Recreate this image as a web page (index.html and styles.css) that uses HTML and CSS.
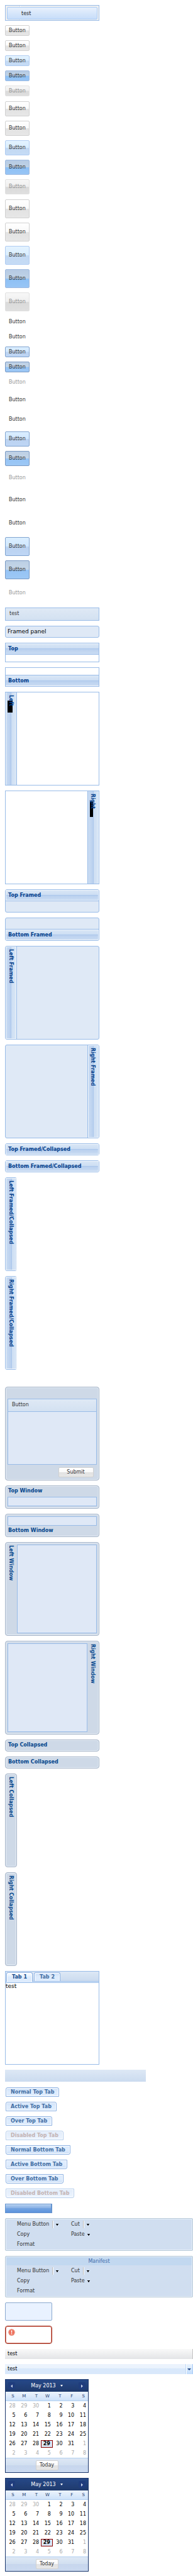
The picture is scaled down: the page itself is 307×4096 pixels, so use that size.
FILE: index.html
```html
<!DOCTYPE html>
<html lang="en">
<head>
<meta charset="utf-8">
<title>Theme components</title>
<link rel="stylesheet" href="styles.css">
</head>
<body>
<main class="page">
  <div class="menu half"><button class="menu-item">test</button></div>

  <section class="buttons small">
    <button class="btn">Button</button>
    <button class="btn">Button</button>
    <button class="btn over">Button</button>
    <button class="btn pressed">Button</button>
    <button class="btn" disabled>Button</button>
  </section>
  <section class="buttons medium">
    <button class="btn">Button</button>
    <button class="btn">Button</button>
    <button class="btn over">Button</button>
    <button class="btn pressed">Button</button>
    <button class="btn" disabled>Button</button>
  </section>
  <section class="buttons large">
    <button class="btn">Button</button>
    <button class="btn">Button</button>
    <button class="btn over">Button</button>
    <button class="btn pressed">Button</button>
    <button class="btn" disabled>Button</button>
  </section>
  <section class="buttons small">
    <button class="btn flat">Button</button>
    <button class="btn flat">Button</button>
    <button class="btn flat over">Button</button>
    <button class="btn flat pressed">Button</button>
    <button class="btn flat" disabled>Button</button>
  </section>
  <section class="buttons medium">
    <button class="btn flat">Button</button>
    <button class="btn flat">Button</button>
    <button class="btn flat over">Button</button>
    <button class="btn flat pressed">Button</button>
    <button class="btn flat" disabled>Button</button>
  </section>
  <section class="buttons large">
    <button class="btn flat">Button</button>
    <button class="btn flat">Button</button>
    <button class="btn flat over">Button</button>
    <button class="btn flat pressed">Button</button>
    <button class="btn flat" disabled>Button</button>
  </section>

  <div class="toolbar half"><span>test</span></div>
  <div class="framed-panel half">Framed panel</div>

  <section class="panel top half"><h2 class="head">Top</h2><div class="body"></div></section>
  <section class="panel bottom half"><div class="body"></div><h2 class="head">Bottom</h2></section>
  <section class="panel left half"><h2 class="head marked"><span>Left</span></h2><div class="body"></div></section>
  <section class="panel right half"><div class="body"></div><h2 class="head marked"><span>Right</span></h2></section>

  <section class="panel framed top half"><h2 class="head">Top Framed</h2><div class="body"></div></section>
  <section class="panel framed bottom half"><div class="body"></div><h2 class="head">Bottom Framed</h2></section>
  <section class="panel framed left half"><h2 class="head">Left Framed</h2><div class="body"></div></section>
  <section class="panel framed right half"><div class="body"></div><h2 class="head">Right Framed</h2></section>

  <section class="panel framed top closed half"><h2 class="head">Top Framed/Collapsed</h2></section>
  <section class="panel framed bottom closed half"><h2 class="head">Bottom Framed/Collapsed</h2></section>
  <section class="panel framed left closed"><h2 class="head">Left Framed/Collapsed</h2></section>
  <section class="panel framed left closed"><h2 class="head">Right Framed/Collapsed</h2></section>

  <section class="window dialog half">
    <div class="window-body"><div class="window-bar">Button</div></div>
    <div class="window-foot"><button class="btn">Submit</button></div>
  </section>
  <section class="window top half"><h2 class="title">Top Window</h2><div class="window-body"></div></section>
  <section class="window bottom half"><div class="window-body"></div><h2 class="title">Bottom Window</h2></section>
  <section class="window left half"><h2 class="title">Left Window</h2><div class="window-body"></div></section>
  <section class="window right half"><div class="window-body"></div><h2 class="title">Right Window</h2></section>
  <section class="window closed half"><h2 class="title">Top Collapsed</h2></section>
  <section class="window closed half"><h2 class="title">Bottom Collapsed</h2></section>
  <section class="window left closed"><h2 class="title">Left Collapsed</h2></section>
  <section class="window left closed"><h2 class="title">Right Collapsed</h2></section>

  <section class="tab-panel half">
    <div class="tab-strip" role="tablist">
      <button class="tab active" role="tab" aria-selected="true">Tab 1</button>
      <button class="tab" role="tab" aria-selected="false">Tab 2</button>
    </div>
    <div class="tab-band"></div>
    <div class="tab-body">test</div>
  </section>
  <div class="tab-bar"></div>

  <section class="tab-list">
    <button class="tab">Normal Top Tab</button>
    <button class="tab">Active Top Tab</button>
    <button class="tab">Over Top Tab</button>
    <button class="tab" disabled>Disabled Top Tab</button>
    <button class="tab low">Normal Bottom Tab</button>
    <button class="tab low">Active Bottom Tab</button>
    <button class="tab low">Over Bottom Tab</button>
    <button class="tab low" disabled>Disabled Bottom Tab</button>
  </section>

  <div class="progress quarter"></div>

  <section class="group">
    <div class="group-grid">
      <button class="tool">Menu Button<i class="split"></i><svg class="caret" viewBox="0 0 4 3"><path d="M0 0h4v1H3v1H2.500V3h-1V2H1V1H0z"/></svg></button>
      <button class="tool">Cut<i class="split"></i><svg class="caret" viewBox="0 0 4 3"><path d="M0 0h4v1H3v1H2.500V3h-1V2H1V1H0z"/></svg></button>
      <button class="tool">Copy</button>
      <button class="tool">Paste<svg class="caret" viewBox="0 0 4 3"><path d="M0 0h4v1H3v1H2.500V3h-1V2H1V1H0z"/></svg></button>
      <button class="tool">Format</button>
    </div>
  </section>
  <section class="group">
    <h2 class="group-title">Manifest</h2>
    <div class="group-grid titled">
      <button class="tool">Menu Button<i class="split"></i><svg class="caret" viewBox="0 0 4 3"><path d="M0 0h4v1H3v1H2.500V3h-1V2H1V1H0z"/></svg></button>
      <button class="tool">Cut<i class="split"></i><svg class="caret" viewBox="0 0 4 3"><path d="M0 0h4v1H3v1H2.500V3h-1V2H1V1H0z"/></svg></button>
      <button class="tool">Copy</button>
      <button class="tool">Paste<svg class="caret" viewBox="0 0 4 3"><path d="M0 0h4v1H3v1H2.500V3h-1V2H1V1H0z"/></svg></button>
      <button class="tool">Format</button>
    </div>
  </section>

  <div class="tip quarter"></div>
  <div class="tip error quarter">
    <svg class="alert" viewBox="0 0 16 16">
      <circle cx="8" cy="8" r="7.500" fill="#d9604c"/>
      <circle cx="8" cy="8" r="6.300" fill="#ee6a55" stroke="#f9b5a5" stroke-width="1"/>
      <path d="M6.800 3.500h2.400v5.500H6.800zM6.800 10.300h2.400v2.200H6.800z" fill="#fff"/>
    </svg>
  </div>

  <div class="column-head"><span>test</span></div>
  <div class="column-head over"><span>test</span><button class="trigger" aria-label="Column menu"><svg viewBox="0 0 6 3"><path d="M0 0h6L3 3z"/></svg></button></div>

  <section class="calendar">
    <header class="cal-head">
      <button class="nav" aria-label="Previous month"><svg viewBox="0 0 4 7"><path d="M4 0v7L0 3.500z"/></svg></button>
      <button class="month">May 2013<svg viewBox="0 0 4 3"><path d="M0 0h4L2 3z"/></svg></button>
      <button class="nav" aria-label="Next month"><svg viewBox="0 0 4 7"><path d="M0 0v7l4-3.500z"/></svg></button>
    </header>
    <table class="days">
      <thead><tr><th>S</th><th>M</th><th>T</th><th>W</th><th>T</th><th>F</th><th>S</th></tr></thead>
      <tbody>
        <tr><td class="out">28</td><td class="out">29</td><td class="out">30</td><td>1</td><td>2</td><td>3</td><td>4</td></tr>
        <tr><td>5</td><td>6</td><td>7</td><td>8</td><td>9</td><td>10</td><td>11</td></tr>
        <tr><td>12</td><td>13</td><td>14</td><td>15</td><td>16</td><td>17</td><td>18</td></tr>
        <tr><td>19</td><td>20</td><td>21</td><td>22</td><td>23</td><td>24</td><td>25</td></tr>
        <tr><td>26</td><td>27</td><td>28</td><td class="today"><span>29</span></td><td>30</td><td>31</td><td class="out">1</td></tr>
        <tr><td class="out">2</td><td class="out">3</td><td class="out">4</td><td class="out">5</td><td class="out">6</td><td class="out">7</td><td class="out">8</td></tr>
      </tbody>
    </table>
    <footer class="cal-foot"><button class="btn">Today</button></footer>
  </section>
  <section class="calendar">
    <header class="cal-head">
      <button class="nav" aria-label="Previous month"><svg viewBox="0 0 4 7"><path d="M4 0v7L0 3.500z"/></svg></button>
      <button class="month">May 2013<svg viewBox="0 0 4 3"><path d="M0 0h4L2 3z"/></svg></button>
      <button class="nav" aria-label="Next month"><svg viewBox="0 0 4 7"><path d="M0 0v7l4-3.500z"/></svg></button>
    </header>
    <table class="days">
      <thead><tr><th>S</th><th>M</th><th>T</th><th>W</th><th>T</th><th>F</th><th>S</th></tr></thead>
      <tbody>
        <tr><td class="out">28</td><td class="out">29</td><td class="out">30</td><td>1</td><td>2</td><td>3</td><td>4</td></tr>
        <tr><td>5</td><td>6</td><td>7</td><td>8</td><td>9</td><td>10</td><td>11</td></tr>
        <tr><td>12</td><td>13</td><td>14</td><td>15</td><td>16</td><td>17</td><td>18</td></tr>
        <tr><td>19</td><td>20</td><td>21</td><td>22</td><td>23</td><td>24</td><td>25</td></tr>
        <tr><td>26</td><td>27</td><td>28</td><td class="today"><span>29</span></td><td>30</td><td>31</td><td class="out">1</td></tr>
        <tr><td class="out">2</td><td class="out">3</td><td class="out">4</td><td class="out">5</td><td class="out">6</td><td class="out">7</td><td class="out">8</td></tr>
      </tbody>
    </table>
    <footer class="cal-foot"><button class="btn">Today</button></footer>
  </section>
</main>
</body>
</html>
```

FILE: styles.css
```css
* { box-sizing: border-box; }
body { margin: 0; background: #fff; font: 8px/10px "DejaVu Sans", Verdana, sans-serif; color: #000; }
h2 { margin: 0; font: inherit; }
button { margin: 0; padding: 0; border: 0; background: none; font: inherit; color: inherit; white-space: nowrap; }
svg { display: block; }

.page { display: flex; flex-direction: column; align-items: flex-start; gap: 8px; padding: 8px 0 7px 8px; }
.half { width: 50%; }
.quarter { width: 25%; }

/* Menu */
.menu { padding: 2px 2px 1px; margin-bottom: -1px; border: 1px solid #99bce8; background: linear-gradient(90deg, #f0f0f0 22px, #e0e0e0 22px, #e0e0e0 23px, #fff 23px, #fff 24px, #f0f0f0 24px); }
.menu-item { display: block; width: 100%; height: 20px; padding: 2px 0 0 22px; border: 1px solid #a9cbf5; border-radius: 2px; background: linear-gradient(#e7f0fc, #c7ddf9); text-align: left; color: #222; }

/* Buttons */
.buttons { display: flex; flex-direction: column; align-items: flex-start; gap: 7px; }
.btn { height: 17px; padding: 0 5px; border: 1px solid #d1d1d1; border-radius: 2px; background: linear-gradient(#fff, #f9f9f9 48%, #e2e2e2 52%, #e7e7e7); color: #333; }
.buttons .btn { min-width: 38px; }
.medium .btn { height: 24px; }
.large .btn { height: 30px; }
.btn.over { border-color: #b0ccf2; background: linear-gradient(#e4f3ff, #d9edff 48%, #c2d8f2 52%, #c6dcf6); }
.btn.pressed { border-color: #9ebae1; background: linear-gradient(#b6cbe4, #bfd2e6 48%, #8dc0f5 52%, #98c5f5); }
.btn:disabled { border-color: #e1e1e1; background: linear-gradient(#f7f7f7, #efefef 48%, #dadada 52%, #dfdfdf); color: #8f8f8f; }
.btn.flat, .btn.flat:disabled { border-color: transparent; background: none; }
.btn.flat:disabled { color: #999; }
.btn.flat.over { border-color: #81a4d0; background: linear-gradient(#dbeeff, #d0e7ff 48%, #bbd2f0 52%, #bed6f5); }
.btn.flat.pressed { border-color: #7a9ac4; background: linear-gradient(#bccfe5, #c5d6e7 48%, #95c3f5 52%, #9dc8f5); }

.toolbar { height: 21px; padding: 4px 6px; border: 1px solid #99bce8; background: linear-gradient(#dfe9f5, #d3e1f1); color: #333; }
.framed-panel { height: 19px; padding: 3px; border: 1px solid #99bce8; border-radius: 3px; background: #dfe9f6; font-size: 9px; line-height: 11px; }

/* Panels */
.panel { display: flex; border: 1px solid #99bce8; }
.panel.top, .panel.bottom { flex-direction: column; }
.panel .head { display: flex; align-items: center; padding: 0 4px; color: #04408c; font-weight: bold; }
.panel.top .head, .panel.bottom .head { height: 18px; background: linear-gradient(#dae7f6, #cddef3 45%, #abc7ec 46%, #abc7ec 50%, #b8cfee 51%, #cbddf3); }
.panel.top .head { border-bottom: 1px solid #99bce8; box-shadow: inset 0 1px #f0f5fb; }
.panel.bottom .head { border-top: 1px solid #99bce8; box-shadow: inset 0 -1px #f0f5fb; }
.panel .body { height: 11px; }
.panel.left, .panel.right { height: 149px; }
.panel.left .body, .panel.right .body { flex: 1; height: auto; }
.panel.left .head, .panel.right .head { width: 18px; padding: 4px 2px 4px 0; writing-mode: vertical-rl; justify-content: flex-start; background: linear-gradient(270deg, #dae7f6, #cddef3 45%, #abc7ec 46%, #abc7ec 50%, #b8cfee 51%, #cbddf3); }
.panel.left .head { border-right: 1px solid #99bce8; box-shadow: inset 1px 0 #f0f5fb; }
.panel.right .head { border-left: 1px solid #99bce8; box-shadow: inset -1px 0 #f0f5fb; }
.marked { position: relative; }
.marked span { position: relative; }
.marked::before { content: ""; position: absolute; top: 13px; left: 3px; width: 8px; height: 19px; background: #000; }
.right .marked::before { top: 16px; width: 5px; height: 25px; }

.panel.framed { border-radius: 3px; background: #dfe9f6; }
.panel.framed .body { height: 17px; }
.panel.framed .head { box-shadow: inset 0 0 0 1px #f0f5fb; }
.panel.framed.top .head { border-radius: 2px 2px 0 0; }
.panel.framed.bottom .head { border-radius: 0 0 2px 2px; }
.panel.framed.left .head { border-radius: 2px 0 0 2px; }
.panel.framed.right .head { border-radius: 0 2px 2px 0; }
.panel.closed .head { flex: 1; border: 0; border-radius: 2px; }
.panel.closed.top .head, .panel.closed.bottom .head { flex: none; height: 17px; }
.panel.left.closed { width: 19px; }

/* Windows */
.window { display: flex; flex-direction: column; padding: 3px; border: 1px solid #a2b1c5; border-radius: 4px; background: #ced9e7; box-shadow: inset 0 0 0 1px #e9f0f8; }
.title { padding: 0 1px; color: #04468c; font-weight: bold; }
.window-body { border: 1px solid #99bce8; background: #dfe8f6; }
.dialog { height: 149px; margin-top: 19px; padding-top: 18px; }
.dialog .window-body { flex: 1; }
.window-bar { height: 20px; padding: 4px 6px; border-bottom: 1px solid #99bce8; background: linear-gradient(#dfe9f5, #d3e1f1); color: #333; }
.window-foot { display: flex; justify-content: flex-end; padding: 4px 5px 1px; }
.window-foot .btn { width: 56px; height: 16px; }
.window.top .window-body, .window.bottom .window-body { height: 15px; }
.window.top { height: 37px; justify-content: space-between; }
.window.bottom { height: 37px; gap: 3px; }
.window.left, .window.right { height: 149px; flex-direction: row; }
.window.left .title, .window.right .title { width: 15px; padding: 1px 5px 1px 0; writing-mode: vertical-rl; }
.window.right .title { padding-right: 2px; }
.window.left .window-body, .window.right .window-body { flex: 1; }
.window.closed { min-height: 19px; }
.window.left.closed { width: 19px; }

/* Tabs */
.tab { display: block; height: 15px; padding: 0 7px; border: 1px solid #8db2e3; border-radius: 3px 3px 0 0; background: linear-gradient(#cfe1f8, #deecfd 50%); box-shadow: inset 0 0 0 1px #fff; color: #416da3; font-weight: bold; }
.tab.low { border-radius: 0 0 3px 3px; background: linear-gradient(#deecfd 50%, #cfe1f8); }
.tab:disabled { border-color: #b4cdec; background: linear-gradient(#e1ecfa, #edf4fe); color: #c3b3b3; }
.tab-panel { height: 149px; border: 1px solid #99bce8; }
.tab-strip { display: flex; gap: 2px; height: 16px; padding: 1px 1px 0; border-bottom: 1px solid #99bce8; background: linear-gradient(#dde8f5, #cbdbef); }
.tab-strip .tab { min-width: 42px; height: 14px; border-bottom: 0; box-shadow: inset 1px 1px #fff, inset -1px 0 #fff; }
.tab-strip .tab.active { height: 15px; background: linear-gradient(#fff, #deecfd 50%); color: #15498b; }
.tab-band { height: 2px; border-bottom: 1px solid #99bce8; background: #deecfd; }
.tab-body { font-size: 9px; line-height: 11px; }
.tab-bar { width: 75%; height: 19px; background: linear-gradient(#dde8f5, #cbdbef); }
.tab-list { display: flex; flex-direction: column; align-items: flex-start; gap: 8px; padding: 1px; }

.progress { height: 15px; border: 1px solid #6594cf; border-right-width: 2px; background: linear-gradient(#b2cff0, #86aee5 49%, #73a3e0 50%, #5b92dc); box-shadow: inset 0 1px #c5daf3; }

/* Button groups */
.group { align-self: stretch; padding: 1px; border: 1px solid #b7c8d7; border-radius: 2px; background: #d0def0; box-shadow: inset 0 0 0 1px #e7f0fa; }
.group-title { height: 13px; line-height: 13px; background: #c2d8f0; color: #3e6aaa; text-align: center; }
.group-grid { display: grid; grid-template-columns: 86px 1fr; grid-auto-rows: 16px; padding-left: 17px; }
.group-grid.titled { padding-top: 1px; }
.tool { display: flex; align-items: center; gap: 4px; color: #333; }
.split { width: 2px; height: 12px; margin-left: 1px; border-left: 1px solid #bbb; background: #fff; }
.caret { width: 4px; height: 3px; fill: #000; }

/* Tips */
.tip { height: 29px; border: 1px solid #8ba9cf; border-radius: 2px; background: #e9f2ff; }
.tip.error { padding: 4px; border-color: #a1311f; border-radius: 4px; background: #fff; box-shadow: inset 0 0 0 1px #d9857b; }
.alert { width: 11px; height: 11px; }

/* Grid column headers */
.column-head { display: flex; align-self: stretch; height: 16px; padding-left: 4px; border-right: 1px solid #c5c5c5; background: linear-gradient(#f9f9f9, #e3e4e6); line-height: 15px; }
.column-head.over { border-right-color: #aaccf6; background: linear-gradient(#ebf3fd 40%, #d9e8fb 42%); }
.column-head span { flex: 1; }
.trigger { display: flex; align-items: center; justify-content: center; width: 11px; border-left: 1px solid #c0d8f5; box-shadow: inset 1px 0 #fff; background: linear-gradient(#eaf4fe, #c1dcfc); }
.trigger svg { width: 6px; height: 3px; fill: #1b3f7c; }

/* Date picker */
.calendar { width: 133px; border: 1px solid #1b376c; background: #fff; }
.cal-head { display: flex; align-items: center; justify-content: space-between; height: 19px; padding: 0 4px; background: linear-gradient(#264888, #1f3a6c); color: #fff; }
.nav { display: flex; align-items: center; justify-content: center; width: 11px; height: 11px; border: 1px solid #1e3d7c; border-radius: 1px; background: #203c7d; }
.nav svg { width: 3px; height: 6px; fill: #c6d3e8; }
.month { display: flex; align-items: center; gap: 7px; }
.month svg { width: 4px; height: 3px; fill: #fff; }
.days { width: 100%; table-layout: fixed; border-collapse: separate; border-spacing: 0; }
.days th { height: 15px; padding: 0 5px 0 0; border-bottom: 1px solid #b2d0f0; background: linear-gradient(#edf4fd, #cde1f9); color: #233d6d; font-size: 7px; font-weight: normal; text-align: right; }
.days td { height: 15px; padding: 0 3px 0 0; text-align: right; }
.days .out { color: #aaa; }
.days .today { padding: 0; font-weight: bold; }
.today span { display: block; height: 12px; padding-right: 3px; border: 1px solid #8b0000; background: #dae5f3; }
.cal-foot { display: flex; justify-content: center; height: 23px; padding-top: 3px; border-top: 1px solid #b2d0f0; background: linear-gradient(#dee8f5, #d1dff0 49%, #c7d6ed 51%, #cbdaf0); }
.cal-foot .btn { height: 16px; min-width: 36px; }
```
